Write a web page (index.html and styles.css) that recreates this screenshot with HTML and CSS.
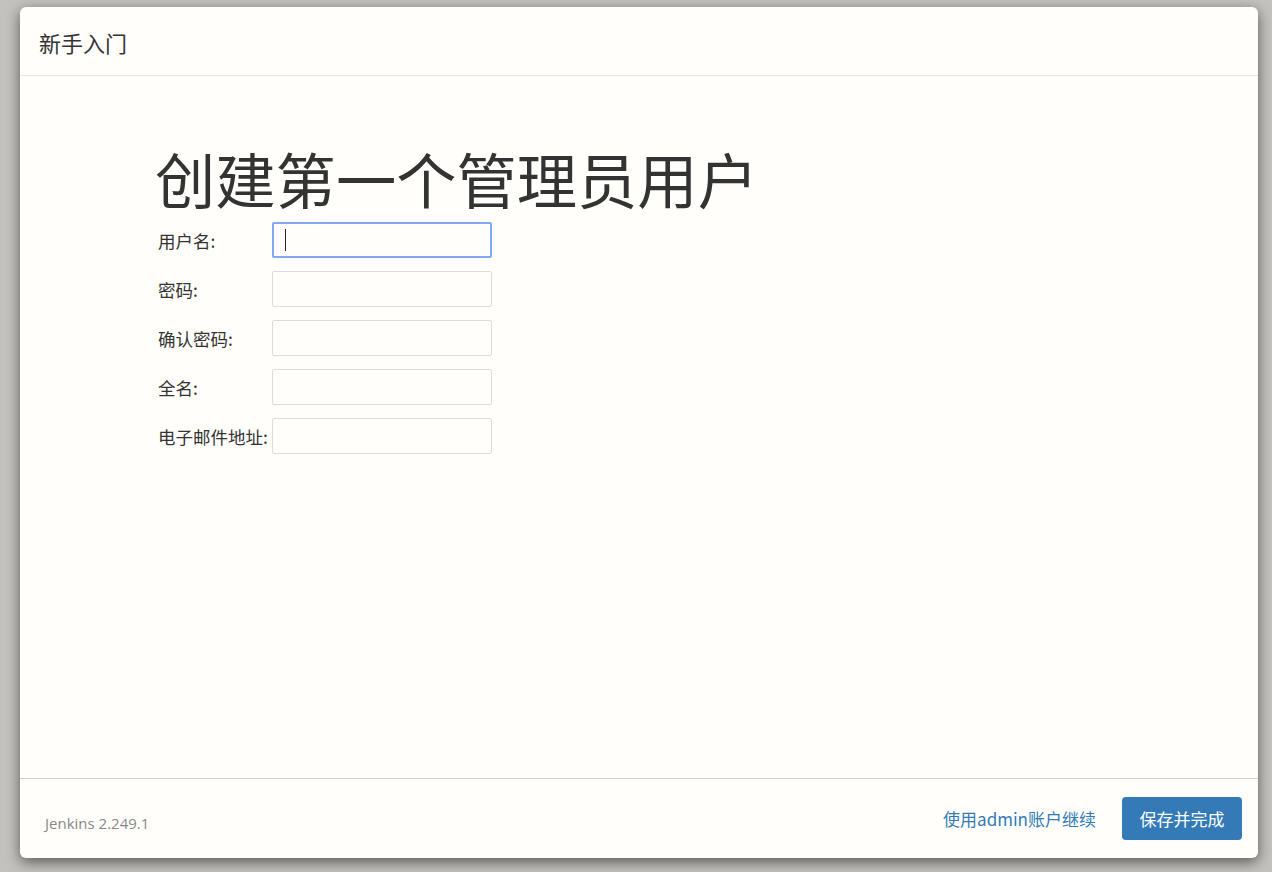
FILE: index.html
```html
<!DOCTYPE html>
<html lang="zh-CN">
<head>
<meta charset="utf-8">
<title>新手入门</title>
<link rel="stylesheet" href="styles.css">
</head>
<body>
<div class="modal">
  <div class="modal-header">
    <h4 class="modal-title">新手入门</h4>
  </div>
  <div class="modal-body">
    <div class="content">
      <h1 class="heading">创建第一个管理员用户</h1>
      <form class="form">
        <div class="row">
          <label class="label">用户名:</label>
          <div class="field">
            <input class="input input-focus" type="text">
            <span class="caret"></span>
          </div>
        </div>
        <div class="row">
          <label class="label">密码:</label>
          <div class="field"><input class="input" type="password"></div>
        </div>
        <div class="row">
          <label class="label">确认密码:</label>
          <div class="field"><input class="input" type="password"></div>
        </div>
        <div class="row">
          <label class="label">全名:</label>
          <div class="field"><input class="input" type="text"></div>
        </div>
        <div class="row">
          <label class="label">电子邮件地址:</label>
          <div class="field"><input class="input" type="text"></div>
        </div>
      </form>
    </div>
  </div>
  <div class="modal-footer">
    <span class="version">Jenkins 2.249.1</span>
    <div class="actions">
      <a class="link" href="#">使用admin账户继续</a>
      <button class="btn" type="button">保存并完成</button>
    </div>
  </div>
</div>
</body>
</html>
```
FILE: styles.css
```css
html, body {
  margin: 0;
  padding: 0;
}
body {
  background: #c3c2be;
  font-family: "Noto Sans", "Noto Sans CJK SC", sans-serif;
  color: #333;
  height: 872px;
  overflow: hidden;
}
.modal {
  margin: 7px 0 0 20px;
  width: 1238px;
  height: 851px;
  background: #fffefa;
  border-radius: 6px;
  box-shadow: 0 4px 14px rgba(0, 0, 0, 0.55);
  display: flex;
  flex-direction: column;
  box-sizing: border-box;
}
.modal-header {
  height: 69px;
  box-sizing: border-box;
  border-bottom: 1px solid #e5e5e3;
  display: flex;
  align-items: center;
  padding: 2px 19px 0;
}
.modal-title {
  margin: 0;
  font-weight: normal;
  font-size: 22px;
  font-family: "Noto Sans CJK SC", sans-serif;
  color: #333;
}
.modal-body {
  flex: 1;
  border-bottom: 1px solid #cfcfcd;
}
.content {
  padding: 64px 0 0 135px;
}
.heading {
  margin: 0;
  font-weight: normal;
  font-size: 60.3px;
  line-height: 76px;
  font-family: "Noto Sans CJK SC", sans-serif;
  color: #333;
}
.form {
  margin: 6px 0 0 3px;
  display: flex;
  flex-direction: column;
  gap: 13px;
}
.row {
  display: flex;
  align-items: center;
}
.label {
  width: 114px;
  font-size: 17.5px;
  font-family: "Noto Sans CJK SC", sans-serif;
  color: #333;
  white-space: nowrap;
}
.field {
  position: relative;
}
.input {
  display: block;
  width: 220px;
  height: 36px;
  box-sizing: border-box;
  border: 1px solid #dcdcda;
  border-radius: 2px;
  background: #fffefa;
  margin: 0;
  padding: 0 12px;
  outline: none;
  font-size: 16px;
}
.input-focus {
  border: 2px solid #7fa9ef;
}
.caret {
  position: absolute;
  left: 13px;
  top: 7px;
  width: 1px;
  height: 22px;
  background: #222;
}
.modal-footer {
  height: 79px;
  display: flex;
  align-items: center;
  justify-content: space-between;
  padding: 0 16px 0 25px;
}
.version {
  font-family: "Open Sans", "Noto Sans", sans-serif;
  font-size: 15px;
  color: #888;
  margin-top: 8px;
}
.actions {
  display: flex;
  align-items: center;
  gap: 26px;
}
.link {
  color: #337ab7;
  text-decoration: none;
  font-size: 17px;
  font-family: "Noto Sans CJK SC", sans-serif;
}
.btn {
  width: 120px;
  height: 43px;
  border: none;
  border-radius: 4px;
  background: #337ab7;
  color: #fff;
  font-size: 17px;
  font-family: "Noto Sans CJK SC", sans-serif;
  padding: 0;
}
```
